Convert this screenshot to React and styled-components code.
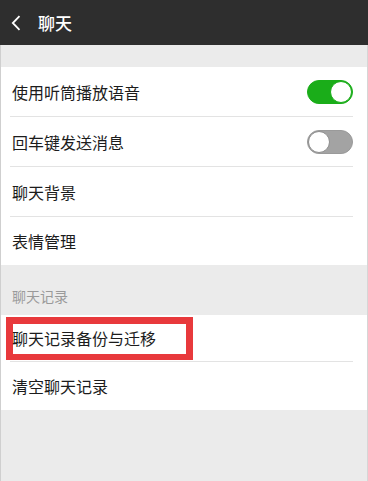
// External Dependencies
import React, {useState} from 'react';
import styled, {createGlobalStyle} from 'styled-components';

// Styled Components
const GlobalStyle = createGlobalStyle`
  html, body {
    margin: 0;
    padding: 0;
    background: #ebebeb;
  }
  body {
    font-family: "Noto Sans CJK SC", "Noto Sans", sans-serif;
  }
`

const Page = styled.div`
  width: 368px;
  height: 481px;
  display: flex;
  flex-direction: column;
  background: #ebebeb;
  overflow: hidden;
`

const Header = styled.header`
  height: 45px;
  flex-shrink: 0;
  display: flex;
  align-items: center;
  background: #2e2e2e;
  color: #fff;
`

const BackButton = styled.button`
  width: 38px;
  height: 45px;
  padding: 0 0 0 11px;
  border: none;
  background: none;
  display: flex;
  align-items: center;
  cursor: pointer;
`

const Title = styled.h1`
  margin: 0;
  font-size: 17px;
  font-weight: 500;
  line-height: 1;
  letter-spacing: 0;
`

const Body = styled.main`
  flex: 1;
  display: flex;
  flex-direction: column;
  border-left: 1px solid #cfcfcf;
  border-right: 1px solid #d6d6d6;
`

const Spacer = styled.div`
  height: 22px;
`

const Group = styled.section`
  background: #fff;
`

const Row = styled.div`
  position: relative;
  height: ${props => props.h}px;
  margin: 0 14px 0 9px;
  padding-left: 2px;
  display: flex;
  align-items: center;
  justify-content: space-between;
  border-bottom: ${props => props.last ? 'none' : '1px solid #e3e3e3'};
  cursor: pointer;
`

const Label = styled.span`
  position: relative;
  z-index: 1;
  font-size: 16px;
  color: #1c1c1c;
  line-height: 1;
`

const SectionTitle = styled.div`
  height: 50px;
  box-sizing: border-box;
  padding: 0 0 12px 11px;
  display: flex;
  align-items: flex-end;
  font-size: 14px;
  color: #9a9a9a;
  line-height: 1;
`

const Switch = styled.div((props) => ({
  width: '46px',
  height: '24px',
  boxSizing: 'border-box',
  borderRadius: '12px',
  background: props.on ? '#1aad19' : '#a3a3a3',
  border: `1px solid ${props.on ? '#1aad19' : '#9a9a9a'}`,
  display: 'flex',
  justifyContent: props.on ? 'flex-end' : 'flex-start',
  alignItems: 'center',
  padding: '0',
  cursor: 'pointer',
}))

const Knob = styled.span((props) => ({
  width: '22px',
  height: '22px',
  boxSizing: 'border-box',
  borderRadius: '50%',
  background: '#fff',
  border: `1px solid ${props.on ? '#1aad19' : '#8e8e8e'}`,
}))

const Highlight = styled.div`
  position: absolute;
  left: -4px;
  top: 2px;
  width: 187px;
  height: 43px;
  box-sizing: border-box;
  border: 7px solid #e8393c;
  border-bottom-width: 6px;
  pointer-events: none;
`

const Toggle = ({on, onClick}) => (
  <Switch on={on} onClick={onClick}>
    <Knob on={on} />
  </Switch>
)

// Component Definition
const App = () => {
  const [earpiece, setEarpiece] = useState(true);
  const [enterSend, setEnterSend] = useState(false);

  return (
    <Page>
      <GlobalStyle />
      <Header>
        <BackButton>
          <svg width="10" height="16" viewBox="0 0 10 16" fill="none">
            <path d="M8.5 1.2 L1.8 8 L8.5 14.8" stroke="#fff" strokeWidth="1.8" />
          </svg>
        </BackButton>
        <Title>聊天</Title>
      </Header>
      <Body>
        <Spacer />
        <Group>
          <Row h={49}>
            <Label>使用听筒播放语音</Label>
            <Toggle on={earpiece} onClick={() => setEarpiece(!earpiece)} />
          </Row>
          <Row h={49}>
            <Label>回车键发送消息</Label>
            <Toggle on={enterSend} onClick={() => setEnterSend(!enterSend)} />
          </Row>
          <Row h={49}>
            <Label>聊天背景</Label>
          </Row>
          <Row h={48} last>
            <Label>表情管理</Label>
          </Row>
        </Group>
        <SectionTitle>聊天记录</SectionTitle>
        <Group>
          <Row h={46}>
            <Highlight />
            <Label>聊天记录备份与迁移</Label>
          </Row>
          <Row h={48} last>
            <Label>清空聊天记录</Label>
          </Row>
        </Group>
      </Body>
    </Page>
  )
}

export default App;
